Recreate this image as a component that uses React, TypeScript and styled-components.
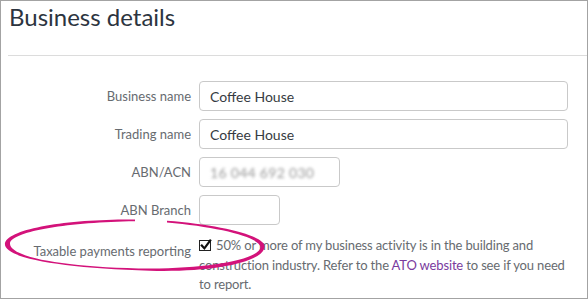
import React from "react";
import styled, { createGlobalStyle } from "styled-components";

const Global = createGlobalStyle`
  html, body { margin: 0; padding: 0; background: #fff; }
  body { font-family: Lato, "Liberation Sans", Arial, sans-serif; }
  * { box-sizing: border-box; }
`;

const Frame = styled.div`
  position: relative;
  width: 588px;
  height: 299px;
  border: 1px solid #a3a3a3;
  background: #fff;
  overflow: hidden;
`;

const Header = styled.div`
  margin-left: 7px;
  height: 55px;
  border-bottom: 1px solid #dcdcdc;
  padding-top: 1px;
  padding-left: 1px;
`;

const Title = styled.h1`
  margin: 0;
  font-family: Lato, "Liberation Sans", Arial, sans-serif;
  font-weight: 400;
  font-size: 24px;
  line-height: 29px;
  color: #2c3440;
`;

const Form = styled.div`
  display: grid;
  grid-template-columns: 190px 369px;
  column-gap: 8px;
  row-gap: 8px;
  padding-top: 25px;
`;

const Label = styled.div<{ $top?: number }>`
  text-align: right;
  font-size: 13px;
  line-height: 18px;
  padding-top: ${(p) => p.$top ?? 6}px;
  color: #676b70;
`;

const Input = styled.div<{ $w?: number }>`
  width: ${(p) => (p.$w ? `${p.$w}px` : "100%")};
  height: 30px;
  border: 1px solid #c9c9c9;
  border-radius: 4px;
  padding: 0 10px;
  display: flex;
  align-items: center;
  font-size: 14px;
  color: #363b42;
`;

const Blurred = styled.span`
  color: #9a9a9a;
  filter: blur(1.4px);
  letter-spacing: 0.3px;
`;

const Description = styled.div`
  padding-top: 3px;
  font-size: 13px;
  line-height: 19.5px;
  letter-spacing: -0.15px;
  color: #676b70;
  white-space: nowrap;
`;

const Check = styled.span`
  display: inline-block;
  position: relative;
  width: 12px;
  height: 11px;
  border: 1px solid #222;
  background: #fff;
  vertical-align: -1px;
  margin-right: 5px;
  svg {
    position: absolute;
    left: 0px;
    top: -2px;
  }
`;

const Link = styled.a`
  color: #7a3a9e;
  text-decoration: none;
`;

const Annotation = styled.svg`
  position: absolute;
  left: -1px;
  top: -1px;
  pointer-events: none;
`;

export default function App() {
  return (
    <>
      <Global />
      <Frame>
        <Header>
          <Title>Business details</Title>
        </Header>
        <Form>
          <Label>Business name</Label>
          <Input>Coffee House</Input>
          <Label>Trading name</Label>
          <Input>Coffee House</Input>
          <Label>ABN/ACN</Label>
          <Input $w={141}>
            <Blurred>16 044 692 030</Blurred>
          </Input>
          <Label>ABN Branch</Label>
          <Input $w={81} />
          <Label $top={9}>Taxable payments reporting</Label>
          <Description>
            <Check>
              <svg width="12" height="12" viewBox="0 0 12 12">
                <path
                  d="M1.8 6.6 L4.4 9.4 L10.2 1.6"
                  fill="none"
                  stroke="#111"
                  strokeWidth="2.2"
                  strokeLinecap="square"
                />
              </svg>
            </Check>
            50% or more of my business activity is in the building and
            <br />
            construction industry. Refer to the <Link>ATO website</Link> to see
            if you need
            <br />
            to report.
          </Description>
        </Form>
        <Annotation width="588" height="299" viewBox="0 0 588 299">
          <path
            d="M135 219.5 C 70 219 10 228 5 243 C 2 258 60 268 150 270.8 C 215 272.5 263 262 264.5 247 C 266 236 222 225 167 220.8 L 167 222.6 C 218 227 259 237 260.5 247 C 259.5 259 213 268 150 268.6 C 62 267.5 8.5 257 10 243 C 13 231 70 222 135 221.2 Z"
            fill="#d3127a"
          />
        </Annotation>
      </Frame>
    </>
  );
}
